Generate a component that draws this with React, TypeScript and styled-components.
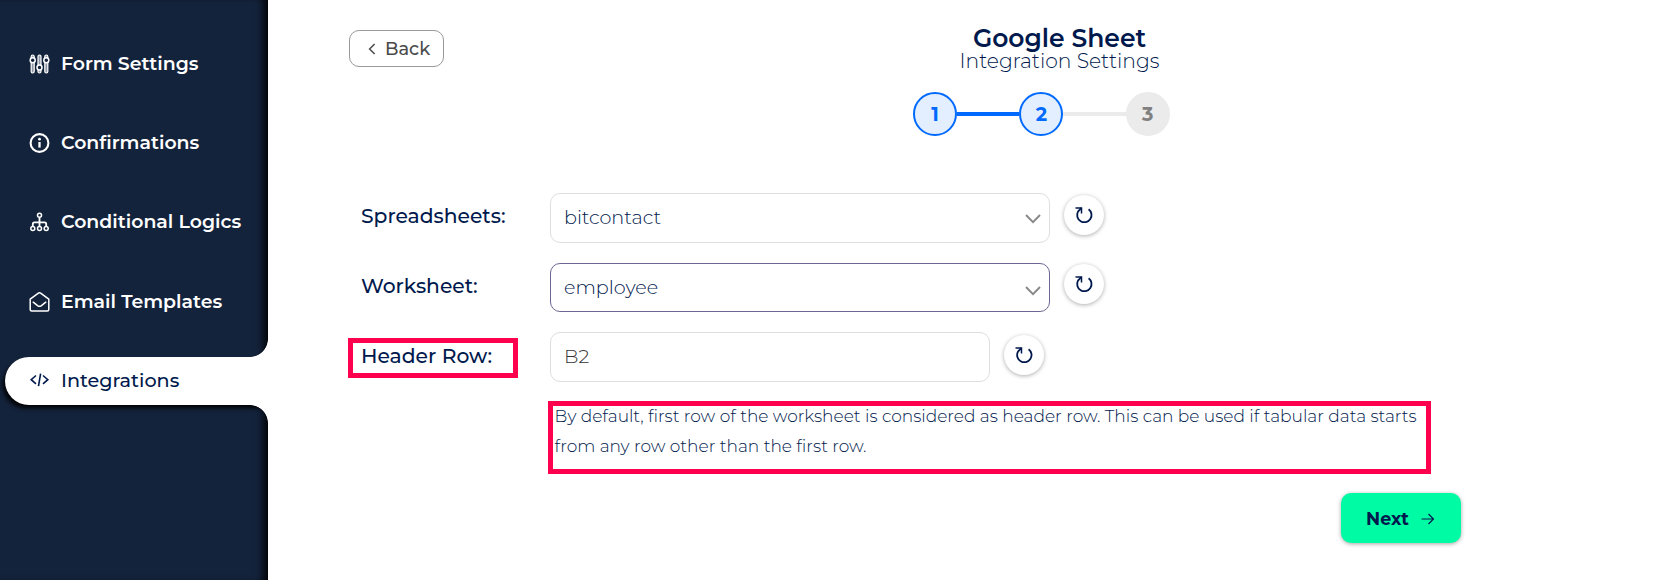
import React from 'react';
import styled, { createGlobalStyle } from 'styled-components';

const GlobalStyle = createGlobalStyle`
  * { box-sizing: border-box; }
  body { margin: 0; background: #fff; color: #00194d; font-family: Montserrat, Inter, sans-serif; overflow: hidden; }
  button, input { font-family: inherit; color: inherit; }
`;

const Page = styled.div`
  display: flex;
  height: 580px;
`;

const Sidebar = styled.nav`
  display: flex;
  flex-direction: column;
  gap: 31.3px;
  width: 268px;
  flex: none;
  padding: 39.8px 0 0 5px;
  background: #14233c;
  box-shadow: inset -9px 0 10px -5px #000;
  clip-path: inset(0);
`;

const NavItem = styled.a<{ $active?: boolean }>`
  position: relative;
  display: flex;
  align-items: center;
  gap: 11px;
  height: 48px;
  padding: 0 0 ${p => (p.$active ? 1.5 : 0)}px 24px;
  border-radius: 24px 0 0 24px;
  font-size: ${p => (p.$active ? 19.2 : 18.9)}px;
  line-height: 24px;
  white-space: nowrap;
  font-weight: ${p => (p.$active ? 500 : 600)};
  color: ${p => (p.$active ? '#00194d' : '#fff')};
  background: ${p => (p.$active ? '#fff' : 'transparent')};
  box-shadow: ${p => (p.$active ? '-3px 4px 5px -1px #000' : 'none')};

  &::before, &::after {
    content: '';
    display: ${p => (p.$active ? 'block' : 'none')};
    position: absolute;
    right: 0;
    width: 18px;
    height: 18px;
  }
  &::before { top: -18px; background: radial-gradient(circle at 0 0, transparent 17.5px, #fff 18.2px); }
  &::after { bottom: -18px; background: radial-gradient(circle at 0 100%, transparent 17.5px, #fff 18.2px); }

  svg { flex: none; }
`;

const Main = styled.main`
  flex: 1;
  padding: 27px 2px 0 81px;
`;

const Header = styled.header`
  display: flex;
  align-items: flex-start;
  height: 65px;
`;

const BackButton = styled.button`
  display: flex;
  align-items: center;
  gap: 9px;
  width: 95px;
  height: 37px;
  margin-top: 3px;
  padding: 0 0 0 18px;
  border: 1px solid #999;
  border-radius: 10px;
  background: #fff;
  color: #4b4b4b;
  font-size: 17.8px;
  font-weight: 550;
`;

const Title = styled.div`
  flex: 1;
  text-align: center;
`;

const Name = styled.h1`
  margin: 0;
  font-size: 25px;
  line-height: 22px;
  font-weight: 600;
`;

const Subtitle = styled.div`
  font-size: 20.3px;
  line-height: 24px;
  font-weight: 300;
`;

const Stepper = styled.div`
  display: flex;
  align-items: center;
  margin-left: 564px;
  height: 44px;
`;

const Step = styled.div<{ $done?: boolean }>`
  display: flex;
  align-items: center;
  justify-content: center;
  width: 44px;
  height: 44px;
  border-radius: 50%;
  border: 2px solid ${p => (p.$done ? '#006aff' : '#ebebeb')};
  background: ${p => (p.$done ? '#e3efff' : '#ebebeb')};
  color: ${p => (p.$done ? '#006aff' : '#808080')};
  font-size: 19.2px;
  font-weight: 700;
`;

const StepLine = styled.div<{ $done?: boolean }>`
  width: 62.4px;
  height: 4px;
  background: ${p => (p.$done ? '#006aff' : '#ebebeb')};
`;

const Form = styled.div`
  display: flex;
  flex-direction: column;
  gap: 20px;
  margin-top: 57px;
`;

const Field = styled.div<{ $height: number }>`
  display: flex;
  height: ${p => p.$height}px;
`;

const LabelCell = styled.div`
  display: flex;
  align-items: center;
  width: 201px;
  height: 46px;
`;

const Label = styled.label<{ $marked?: boolean }>`
  display: flex;
  align-items: center;
  width: 170px;
  height: 40px;
  margin-left: -1px;
  margin-top: ${p => (p.$marked ? 6 : 0)}px;
  padding-left: ${p => (p.$marked ? 8 : 13)}px;
  padding-bottom: ${p => (p.$marked ? 6 : 2)}px;
  border: ${p => (p.$marked ? '5px solid #ff004f' : '0')};
  font-size: 20.3px;
  font-weight: 550;
`;

const Control = styled.div<{ $focused?: boolean; $width: number }>`
  display: flex;
  align-items: center;
  justify-content: space-between;
  width: ${p => p.$width}px;
  padding: 0 8px 0 13px;
  border: 1px solid ${p => (p.$focused ? '#6d6690' : '#dedede')};
  border-radius: 10px;
  font-size: 19.2px;
  font-weight: 300;

  svg { margin-top: ${p => (p.$focused ? 7 : 2)}px; }
`;

const Value = styled.span`
  padding-bottom: 2px;
`;

const CellInput = styled.input`
  width: 100%;
  padding: 0 0 2px;
  border: 0;
  outline: 0;
  background: transparent;
  color: #333;
  font-size: 19.2px;
  font-weight: 300;
`;

const RefreshButton = styled.button<{ $top: number }>`
  display: flex;
  align-items: center;
  justify-content: center;
  width: 40px;
  height: 40px;
  margin: ${p => p.$top}px 0 0 14px;
  padding: 0;
  border: 0;
  border-radius: 50%;
  background: #fff;
  box-shadow: 0 1px 4px rgba(0, 0, 0, 0.32);
`;

const Note = styled.p`
  width: 883px;
  height: 73px;
  margin: 19px 0 0 199px;
  padding: 0 0 0 1.6px;
  border: 5px solid #ff004f;
  font-size: 17px;
  line-height: 30px;
  font-weight: 300;
  white-space: nowrap;
`;

const NoteText = styled.span`
  display: block;
  margin-top: -5px;
`;

const NextButton = styled.button`
  display: flex;
  align-items: center;
  gap: 12px;
  width: 120px;
  height: 50px;
  margin: 19px 0 0 992px;
  padding: 1px 0 0 25px;
  border: 0;
  border-radius: 10px;
  background: #00fba5;
  box-shadow: 0 1px 4px rgba(0, 0, 0, 0.35);
  font-size: 17.5px;
  font-weight: 700;
`;

const SlidersIcon = () => (
  <svg width="21" height="20" viewBox="0 0 21 20" fill="#8f97a5" stroke="#fff" strokeWidth="1.2">
    <rect x="2.2" y="1" width="3" height="18" rx="1.5" />
    <rect x="9" y="1" width="3" height="18" rx="1.5" />
    <rect x="15.8" y="1" width="3" height="18" rx="1.5" />
    <g fill="#14233c" strokeWidth="1.5">
      <circle cx="3.7" cy="6.3" r="2.5" />
      <circle cx="10.5" cy="13.5" r="2.5" />
      <circle cx="17.3" cy="6.3" r="2.5" />
    </g>
  </svg>
);

const InfoIcon = () => (
  <svg width="21" height="20" viewBox="0 0 21 20" fill="none" stroke="#fff" strokeWidth="2.1">
    <circle cx="10.5" cy="10" r="8.9" />
    <path d="M10.5 9v5.6" strokeWidth="2.3" />
    <circle cx="10.5" cy="6.2" r="1.4" fill="#fff" stroke="none" />
  </svg>
);

const TreeIcon = () => (
  <svg width="21" height="20" viewBox="0 0 21 20" fill="none" stroke="#fff" strokeWidth="1.5">
    <circle cx="10.5" cy="3.2" r="2" />
    <circle cx="3.8" cy="16.6" r="2" />
    <circle cx="10.5" cy="16.6" r="2" />
    <circle cx="17.2" cy="16.6" r="2" />
    <path d="M10.5 5.2v9.4M3.8 14.6v-2.7q0-1.6 1.6-1.6h10.2q1.6 0 1.6 1.6v2.7" strokeWidth="1.8" />
  </svg>
);

const MailIcon = () => (
  <svg width="21" height="20" viewBox="0 0 21 20" fill="none" stroke="#fff" strokeWidth="1.5" strokeLinejoin="round" strokeLinecap="round">
    <path d="M1.2 7.2 9.4 1.1q1.1-.7 2.2 0l8.2 6.1v10.3q0 1.5-1.5 1.5H2.7q-1.5 0-1.5-1.5z" />
    <path d="m4.2 10.2 4.7 3.6q1.6 1.1 3.2 0l4.7-3.6" />
  </svg>
);

const CodeIcon = () => (
  <svg width="21" height="20" viewBox="0 0 21 20" fill="none" stroke="#00194d" strokeWidth="1.6">
    <path d="M7 5.5 2.2 9.7 7 13.9M14 5.5l4.8 4.2-4.8 4.2M11.6 3.6 9.5 16.2" />
  </svg>
);

const BackIcon = () => (
  <svg width="8" height="12" viewBox="0 0 8 12" fill="none" stroke="#4b4b4b" strokeWidth="1.5">
    <path d="M6.6 1 1.6 6l5 5" />
  </svg>
);

const ChevronIcon = () => (
  <svg width="16" height="10" viewBox="0 0 16 10" fill="none" stroke="#888" strokeWidth="1.9">
    <path d="m1 1 7 7.2L15 1" />
  </svg>
);

const RefreshIcon = () => (
  <svg width="20" height="20" viewBox="0 0 20 20" fill="none" stroke="#00194d" strokeWidth="1.8">
    <path d="M14.6 4.2A7.2 7.2 0 1 1 4 6.6L7.3 3.2" />
    <path d="M1.5 3h6v5.5" strokeWidth="1.5" />
  </svg>
);

const ArrowIcon = () => (
  <svg width="14" height="12" viewBox="0 0 14 12" fill="none" stroke="#00194d" strokeWidth="1.2">
    <path d="M0.5 6h12M7.5 1l5 5-5 5" />
  </svg>
);

const Refresh = ({ top }: { top: number }) => (
  <RefreshButton $top={top} aria-label="Refresh"><RefreshIcon /></RefreshButton>
);

export default function App() {
  return (
    <>
      <GlobalStyle />
      <Page>
        <Sidebar>
          <NavItem><SlidersIcon />Form Settings</NavItem>
          <NavItem><InfoIcon />Confirmations</NavItem>
          <NavItem><TreeIcon />Conditional Logics</NavItem>
          <NavItem><MailIcon />Email Templates</NavItem>
          <NavItem $active><CodeIcon />Integrations</NavItem>
        </Sidebar>
        <Main>
          <Header>
            <BackButton><BackIcon />Back</BackButton>
            <Title>
              <Name>Google Sheet</Name>
              <Subtitle>Integration Settings</Subtitle>
            </Title>
          </Header>
          <Stepper>
            <Step $done>1</Step>
            <StepLine $done />
            <Step $done>2</Step>
            <StepLine />
            <Step>3</Step>
          </Stepper>
          <Form>
            <Field $height={50}>
              <LabelCell><Label>Spreadsheets:</Label></LabelCell>
              <Control $width={500}><Value>bitcontact</Value><ChevronIcon /></Control>
              <Refresh top={2} />
            </Field>
            <Field $height={49}>
              <LabelCell><Label>Worksheet:</Label></LabelCell>
              <Control $width={500} $focused><Value>employee</Value><ChevronIcon /></Control>
              <Refresh top={1} />
            </Field>
            <Field $height={50}>
              <LabelCell><Label $marked>Header Row:</Label></LabelCell>
              <Control $width={440}><CellInput defaultValue="B2" /></Control>
              <Refresh top={3} />
            </Field>
          </Form>
          <Note>
            <NoteText>
              By default, first row of the worksheet is considered as header row. This can be used if tabular data starts
              <br />
              from any row other than the first row.
            </NoteText>
          </Note>
          <NextButton>Next<ArrowIcon /></NextButton>
        </Main>
      </Page>
    </>
  );
}
